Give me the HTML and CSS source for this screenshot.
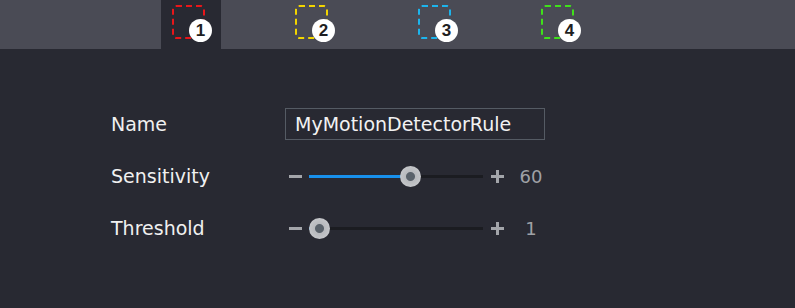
FILE: index.html
```html
<!DOCTYPE html>
<html lang="en">
<head>
    <meta charset="UTF-8">
    <meta name="viewport" content="width=device-width, initial-scale=1.0">
    <title>Motion Detection</title>
    <link rel="stylesheet" href="styles.css">
</head>
<body>
    <div id="tabbar">
        <div class="tab active">
            <div class="mark red"></div>
            <span class="badge">1</span>
        </div>
        <div class="tab">
            <div class="mark yellow"></div>
            <span class="badge">2</span>
        </div>
        <div class="tab">
            <div class="mark cyan"></div>
            <span class="badge">3</span>
        </div>
        <div class="tab">
            <div class="mark green"></div>
            <span class="badge">4</span>
        </div>
    </div>

    <div id="form">
        <div class="row">
            <label class="lbl">Name</label>
            <input type="text" class="txtName" value="MyMotionDetectorRule">
        </div>
        <div class="row">
            <label class="lbl">Sensitivity</label>
            <div class="slider">
                <span class="minus"></span>
                <div class="track">
                    <div class="fill" style="width: 58%"></div>
                    <div class="knob" style="left: 58%"></div>
                </div>
                <span class="plus"></span>
                <span class="val">60</span>
            </div>
        </div>
        <div class="row">
            <label class="lbl">Threshold</label>
            <div class="slider">
                <span class="minus"></span>
                <div class="track">
                    <div class="fill" style="width: 6%"></div>
                    <div class="knob" style="left: 6%"></div>
                </div>
                <span class="plus"></span>
                <span class="val">1</span>
            </div>
        </div>
    </div>
</body>
</html>
```

FILE: styles.css
```css
body {
    margin: 0;
    background: #282932;
    font-family: "DejaVu Sans", "Noto Sans", sans-serif;
    width: 795px;
    height: 308px;
    overflow: hidden;
}
#tabbar {
    height: 49px;
    background: #4a4b55;
    display: flex;
    padding-left: 161px;
    gap: 63px;
}
.tab {
    width: 60px;
    height: 49px;
    position: relative;
}
.tab.active {
    background: #282932;
}
.mark {
    box-sizing: border-box;
    width: 33px;
    height: 34px;
    margin: 5px 0 0 11px;
    border: 2px dashed;
    border-radius: 4px;
}
.red { border-color: #e8161a; }
.yellow { border-color: #f2d500; }
.cyan { border-color: #1cb4ec; }
.green { border-color: #3fe01a; }
.badge {
    position: absolute;
    left: 28px;
    top: 19px;
    width: 23px;
    height: 23px;
    border-radius: 50%;
    background: #fff;
    color: #1e1e22;
    font-family: "Liberation Sans", Arial, sans-serif;
    font-weight: bold;
    font-size: 17px;
    line-height: 23px;
    text-align: center;
}
#form {
    padding: 49px 0 0 111px;
}
.row {
    display: grid;
    grid-template-columns: 174px 1fr;
    align-items: center;
    height: 52px;
}
.lbl {
    color: #f0f0f0;
    font-size: 19px;
}
.txtName {
    box-sizing: border-box;
    width: 260px;
    height: 32px;
    background: #282932;
    border: 1px solid #555b64;
    color: #f2f2f2;
    font-family: "DejaVu Sans", "Noto Sans", sans-serif;
    font-size: 19px;
    padding: 0 9px;
    outline: none;
}
.slider {
    display: flex;
    align-items: center;
    padding-left: 4px;
}
.minus {
    width: 13px;
    height: 3px;
    background: #a3a5aa;
}
.track {
    position: relative;
    width: 174px;
    height: 3px;
    margin-left: 7px;
    background: #1b1c21;
}
.fill {
    height: 3px;
    background: #1890ec;
}
.knob {
    position: absolute;
    top: -9px;
    width: 21px;
    height: 21px;
    margin-left: -10px;
    border-radius: 50%;
    background: radial-gradient(circle, #5a626b 0 4px, #b8babe 5px, #cfd0d3 100%);
}
.plus {
    position: relative;
    width: 13px;
    height: 13px;
    margin-left: 8px;
    background:
        linear-gradient(#a3a5aa, #a3a5aa) center / 13px 3px no-repeat,
        linear-gradient(#a3a5aa, #a3a5aa) center / 3px 13px no-repeat;
}
.val {
    width: 38px;
    margin-left: 8px;
    text-align: center;
    color: #9fa1a6;
    font-size: 18px;
}
```
